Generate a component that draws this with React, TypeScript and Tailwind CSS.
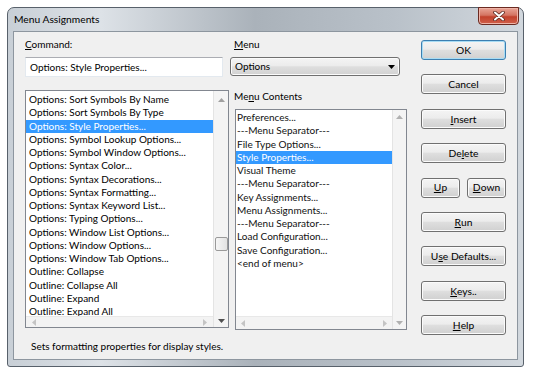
import React from "react";

const commands = [
  "Options: Sort Symbols By Name",
  "Options: Sort Symbols By Type",
  "Options: Style Properties...",
  "Options: Symbol Lookup Options...",
  "Options: Symbol Window Options...",
  "Options: Syntax Color...",
  "Options: Syntax Decorations...",
  "Options: Syntax Formatting...",
  "Options: Syntax Keyword List...",
  "Options: Typing Options...",
  "Options: Window List Options...",
  "Options: Window Options...",
  "Options: Window Tab Options...",
  "Outline: Collapse",
  "Outline: Collapse All",
  "Outline: Expand",
  "Outline: Expand All",
];

const menuItems = [
  "Preferences...",
  "---Menu Separator---",
  "File Type Options...",
  "Style Properties...",
  "Visual Theme",
  "---Menu Separator---",
  "Key Assignments...",
  "Menu Assignments...",
  "---Menu Separator---",
  "Load Configuration...",
  "Save Configuration...",
  "<end of menu>",
];

// tiny scrollbar arrows
function Arrow({ dir, color = "#9a9a9a" }: { dir: "up" | "down" | "left" | "right"; color?: string }) {
  const pts = {
    up: "0,4 3.5,0 7,4",
    down: "0,0 7,0 3.5,4",
    left: "4,0 4,7 0,3.5",
    right: "0,0 0,7 4,3.5",
  }[dir];
  const vertical = dir === "up" || dir === "down";
  return (
    <svg width={vertical ? 7 : 4} height={vertical ? 4 : 7} viewBox={vertical ? "0 0 7 4" : "0 0 4 7"}>
      <polygon points={pts} fill={color} />
    </svg>
  );
}

function Btn({ children, primary, w = "w-[85px]" }: { children: React.ReactNode; primary?: boolean; w?: string }) {
  return (
    <div
      className={`${w} h-[20px] rounded-[3px] border flex items-center justify-center text-[10.25px] leading-none text-black bg-[linear-gradient(180deg,#f4f4f4_0%,#ececec_45%,#dedede_52%,#d0d0d0_100%)] ${
        primary
          ? "border-[#3c7fb1] shadow-[inset_0_0_0_1px_#a8dcf4]"
          : "border-[#707070] shadow-[inset_0_0_0_1px_#fbfbfb]"
      }`}
    >
      {children}
    </div>
  );
}

export default function App() {
  return (
    <div className="w-[533px] h-[372px] bg-white pt-[7px] pl-[7px] font-['Lato',sans-serif] text-[10px] text-black">
      {/* Window frame */}
      <div className="relative w-[517px] h-[360px] rounded-t-[7px] rounded-b-[3px] border border-[#58616b] bg-[linear-gradient(90deg,#c8cfd6_0%,#dde2e7_18%,#aab2ba_48%,#b9c1c9_75%,#d2d8de_100%)] flex flex-col">
        {/* Title bar */}
        <div className="h-[23px] flex items-center pl-[6px] text-[10.25px] text-black">Menu Assignments</div>

        {/* Close button */}
        <div className="absolute top-[-1px] right-[4px] w-[41px] h-[18px] rounded-b-[4px] border border-[#6b2a21] bg-[linear-gradient(180deg,#e9a597_0%,#d47462_45%,#c2412c_55%,#d0604a_100%)] flex items-center justify-center shadow-[inset_0_0_0_1px_#efb3a6]">
          <svg width="12" height="10" viewBox="0 0 12 10">
            <path d="M2 1.5 L10 8.5 M10 1.5 L2 8.5" stroke="#5a2a22" strokeWidth="3.6" strokeLinecap="round" />
            <path d="M2 1.5 L10 8.5 M10 1.5 L2 8.5" stroke="#ffffff" strokeWidth="2" strokeLinecap="round" />
          </svg>
        </div>

        {/* Client area */}
        <div className="mx-[5px] mb-[6px] flex-1 border border-[#8d969f] bg-[#f0f0f0] flex">
          <div className="pl-[11px] pt-[6px] flex flex-col">
            <div className="flex gap-[1px]">
              {/* Column A */}
              <div className="w-[204px] flex flex-col">
                <div className="h-[13px] leading-[13px]">
                  <span className="underline">C</span>ommand:
                </div>
                <div className="mt-[6px] w-[198px] h-[20px] bg-white border border-[#e3e9ef] border-t-[#abadb3] flex items-center pl-[4px]">
                  Options: Style Properties...
                </div>
                {/* Command list */}
                <div className="mt-[13px] h-[238px] border border-[#828790] bg-white flex">
                  <div className="flex-1 flex flex-col min-w-0">
                    <div className="flex-1 overflow-hidden pt-[2px]">
                      {commands.map((c, i) => (
                        <div
                          key={c}
                          className={`h-[13.25px] leading-[13.25px] pl-[3px] whitespace-nowrap ${
                            i === 2 ? "bg-[#3399ff] text-white" : ""
                          }`}
                        >
                          {c}
                        </div>
                      ))}
                    </div>
                    <div className="h-[11px] bg-[#f3f3f3] border-t border-[#e8e8e8] flex items-center justify-between px-[6px]">
                      <Arrow dir="left" color="#c4c4c4" />
                      <Arrow dir="right" color="#c4c4c4" />
                    </div>
                  </div>
                  <div className="w-[15px] bg-[#f4f4f4] border-l border-[#e4e4e4] flex flex-col items-center">
                    <div className="h-[16px] flex items-center justify-center pt-[1px]">
                      <Arrow dir="up" color="#a0a0a0" />
                    </div>
                    <div className="mt-[130px] w-[13px] h-[14px] rounded-[2px] border border-[#9a9a9a] bg-[linear-gradient(90deg,#f6f6f6,#e2e2e2)]" />
                    <div className="mt-auto h-[12px] flex items-center justify-center">
                      <Arrow dir="down" color="#505050" />
                    </div>
                  </div>
                </div>
              </div>

              {/* Column B */}
              <div className="w-[177px] flex flex-col">
                <div className="h-[13px] leading-[13px] pl-[4px]">
                  <span className="underline">M</span>enu
                </div>
                <div className="mt-[6px] w-[170px] h-[19px] rounded-[3px] border border-[#707070] bg-[linear-gradient(180deg,#f4f4f4_0%,#ececec_45%,#dedede_52%,#d2d2d2_100%)] shadow-[inset_0_0_0_1px_#fbfbfb] flex items-center justify-between pl-[4px] pr-[4px]">
                  <span>Options</span>
                  <svg width="7" height="4" viewBox="0 0 7 4">
                    <polygon points="0,0 7,0 3.5,4" fill="#000" />
                  </svg>
                </div>
                <div className="mt-[14px] h-[13px] leading-[13px] pl-[4px]">
                  Me<span className="underline">n</span>u Contents
                </div>
                {/* Menu contents list */}
                <div className="mt-[6px] ml-[5px] w-[172px] h-[221px] border border-[#828790] bg-white flex">
                  <div className="flex-1 flex flex-col min-w-0">
                    <div className="flex-1 overflow-hidden pt-[1px]">
                      {menuItems.map((m, i) => (
                        <div
                          key={i}
                          className={`h-[13.25px] leading-[13.25px] pl-[1px] whitespace-nowrap ${
                            i === 3 ? "bg-[#3399ff] text-white" : "text-[#111]"
                          }`}
                        >
                          {m}
                        </div>
                      ))}
                    </div>
                    <div className="h-[13px] bg-[#f3f3f3] border-t border-[#e8e8e8] flex items-center justify-between px-[5px]">
                      <Arrow dir="left" color="#c4c4c4" />
                      <Arrow dir="right" color="#c4c4c4" />
                    </div>
                  </div>
                  <div className="w-[14px] bg-[#f4f4f4] border-l border-[#e4e4e4] flex flex-col items-center">
                    <div className="h-[14px] flex items-center justify-center">
                      <Arrow dir="up" color="#b0b0b0" />
                    </div>
                    <div className="mt-auto h-[13px] flex items-center justify-center">
                      <Arrow dir="down" color="#b0b0b0" />
                    </div>
                  </div>
                </div>
              </div>
            </div>

            <div className="mt-[10px] ml-[6px] h-[13px] leading-[13px]">
              Sets formatting properties for display styles.
            </div>
          </div>

          {/* Buttons */}
          <div className="ml-auto pr-[11px] pt-[8px] flex flex-col gap-[14.375px]">
            <Btn primary>OK</Btn>
            <Btn>Cancel</Btn>
            <Btn>
              <span className="underline">I</span>nsert
            </Btn>
            <Btn>
              De<span className="underline">l</span>ete
            </Btn>
            <div className="flex gap-[7px]">
              <Btn w="w-[39px]">
                <span className="underline">U</span>p
              </Btn>
              <Btn w="w-[39px]">
                <span className="underline">D</span>own
              </Btn>
            </div>
            <Btn>
              <span className="underline">R</span>un
            </Btn>
            <Btn>
              U<span className="underline">s</span>e Defaults...
            </Btn>
            <Btn>
              <span className="underline">K</span>eys..
            </Btn>
            <Btn>
              <span className="underline">H</span>elp
            </Btn>
          </div>
        </div>
      </div>
    </div>
  );
}
